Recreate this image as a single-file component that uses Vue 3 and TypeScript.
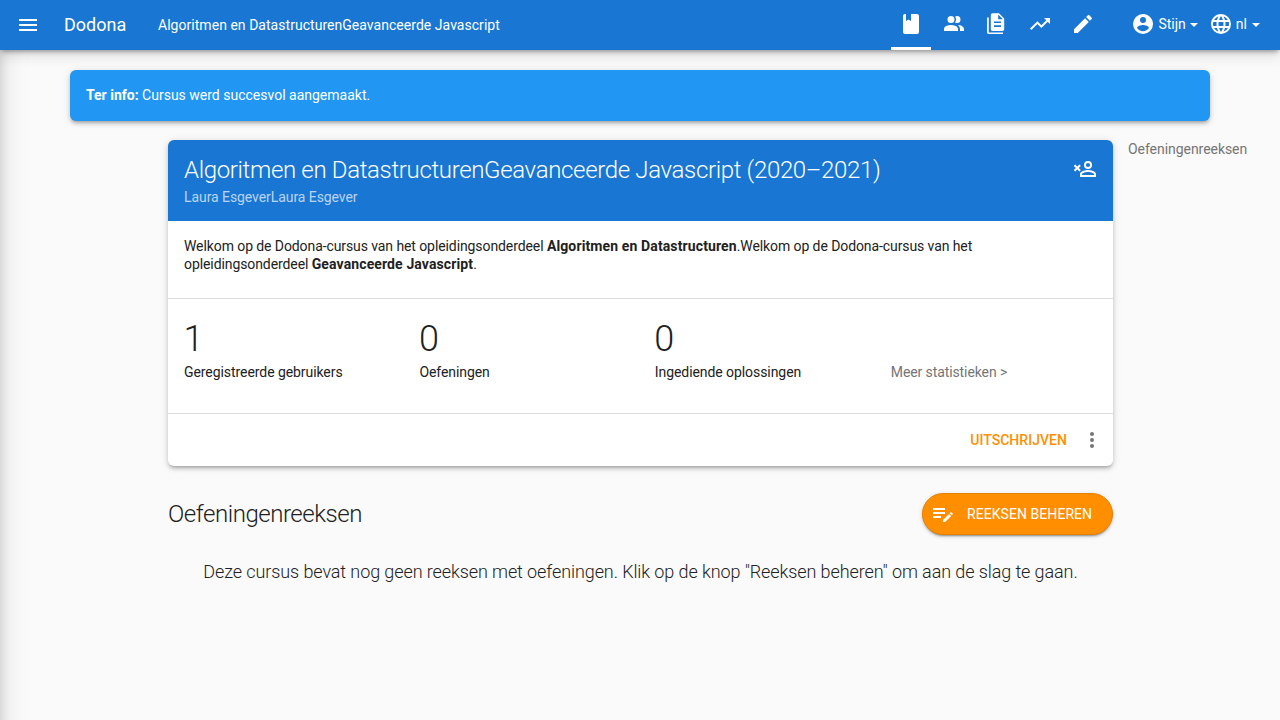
<script setup lang="ts">
interface NavIcon { name: string; path: string; active?: boolean }

const navIcons: NavIcon[] = [
  { name: 'course', active: true, path: 'M18,22A2,2 0 0,0 20,20V4C20,2.89 19.1,2 18,2H12V9L9.5,7.5L7,9V2H6A2,2 0 0,0 4,4V20A2,2 0 0,0 6,22H18Z' },
  { name: 'members', path: 'M16 17V19H2V17S2 13 9 13 16 17 16 17M12.5 7.5A3.5 3.5 0 1 0 9 11A3.5 3.5 0 0 0 12.5 7.5M15.94 13A5.32 5.32 0 0 1 18 17V19H22V17S22 13.37 15.94 13M15 4A3.39 3.39 0 0 0 13.07 4.59A5 5 0 0 1 13.07 10.41A3.39 3.39 0 0 0 15 11A3.5 3.5 0 0 0 15 4Z' },
  { name: 'submissions', path: 'M7.6 1.2H14L19.2 6.4V17.2A1.8 1.8 0 0 1 17.4 19H7.6A1.8 1.8 0 0 1 5.8 17.2V3A1.8 1.8 0 0 1 7.6 1.2M13.2 2.6V7.2H17.8L13.2 2.6M9 9.4V11.1H16V9.4H9M9 13.3V15H16V13.3H9M2 5.5H3.8V20.4H18V22.1H3.8A1.8 1.8 0 0 1 2 20.3V5.5Z' },
  { name: 'statistics', path: 'M16,6L18.29,8.29L13.41,13.17L9.41,9.17L2,16.59L3.41,18L9.41,12L13.41,16L19.71,9.71L22,12V6H16Z' },
  { name: 'edit', path: 'M20.71,7.04C21.1,6.65 21.1,6 20.71,5.63L18.37,3.29C18,2.9 17.35,2.9 16.96,3.29L15.12,5.12L18.87,8.87M3,17.25V21H6.75L17.81,9.93L14.06,6.18L3,17.25Z' },
]

const stats = [
  { value: 1, label: 'Geregistreerde gebruikers' },
  { value: 0, label: 'Oefeningen' },
  { value: 0, label: 'Ingediende oplossingen' },
]
</script>

<template>
  <div class="page">
    <header class="bar">
      <svg class="icon menu" viewBox="0 0 24 24"><path d="M3,6H21V8H3V6M3,11H21V13H3V11M3,16H21V18H3V16Z" /></svg>
      <a class="brand">Dodona</a>
      <a class="crumb">Algoritmen en DatastructurenGeavanceerde Javascript</a>
      <nav class="tabs">
        <a v-for="icon in navIcons" :key="icon.name" class="tab" :class="{ active: icon.active }">
          <svg class="icon" viewBox="0 0 24 24"><path fill-rule="evenodd" :d="icon.path" /></svg>
        </a>
      </nav>
      <a class="drop user">
        <svg class="icon" viewBox="0 0 24 24"><path d="M12,19.2C9.5,19.2 7.29,17.92 6,16C6.03,14 10,12.9 12,12.9C14,12.9 17.97,14 18,16C16.71,17.92 14.5,19.2 12,19.2M12,5A3,3 0 0,1 15,8A3,3 0 0,1 12,11A3,3 0 0,1 9,8A3,3 0 0,1 12,5M12,2A10,10 0 0,0 2,12A10,10 0 0,0 12,22A10,10 0 0,0 22,12C22,6.47 17.5,2 12,2Z" /></svg>
        <span>Stijn</span><i class="caret"></i>
      </a>
      <a class="drop">
        <svg class="icon" viewBox="0 0 24 24"><path d="M16.36,14C16.44,13.34 16.5,12.68 16.5,12C16.5,11.32 16.44,10.66 16.36,10H19.74C19.9,10.64 20,11.31 20,12C20,12.69 19.9,13.36 19.74,14M14.59,19.56C15.19,18.45 15.65,17.25 15.97,16H18.92C17.96,17.65 16.43,18.93 14.59,19.56M14.34,14H9.66C9.56,13.34 9.5,12.68 9.5,12C9.5,11.32 9.56,10.65 9.66,10H14.34C14.43,10.65 14.5,11.32 14.5,12C14.5,12.68 14.43,13.34 14.34,14M12,19.96C11.17,18.76 10.5,17.43 10.09,16H13.91C13.5,17.43 12.83,18.76 12,19.96M8,8H5.08C6.03,6.34 7.57,5.06 9.4,4.44C8.8,5.55 8.35,6.75 8,8M5.08,16H8C8.35,17.25 8.8,18.45 9.4,19.56C7.57,18.93 6.03,17.65 5.08,16M4.26,14C4.1,13.36 4,12.69 4,12C4,11.31 4.1,10.64 4.26,10H7.64C7.56,10.66 7.5,11.32 7.5,12C7.5,12.68 7.56,13.34 7.64,14M12,4.03C12.83,5.23 13.5,6.57 13.91,8H10.09C10.5,6.57 11.17,5.23 12,4.03M18.92,8H15.97C15.65,6.75 15.19,5.55 14.59,4.44C16.43,5.07 17.96,6.34 18.92,8M12,2C6.47,2 2,6.5 2,12A10,10 0 0,0 12,22A10,10 0 0,0 22,12A10,10 0 0,0 12,2Z" /></svg>
        <span>nl</span><i class="caret"></i>
      </a>
    </header>

    <div class="body">
      <div class="alert"><b>Ter info:</b> Cursus werd succesvol aangemaakt.</div>

      <div class="columns">
        <main>
          <section class="card">
            <div class="card-title">
              <div>
                <h1>Algoritmen en DatastructurenGeavanceerde Javascript (2020–2021)</h1>
                <p>Laura EsgeverLaura Esgever</p>
              </div>
              <svg class="icon" viewBox="0 0 24 24"><path fill-rule="evenodd" d="M15 4A4 4 0 1 1 15 12A4 4 0 1 1 15 4M15 5.9A2.1 2.1 0 1 0 15 10.1A2.1 2.1 0 1 0 15 5.9M15 13C17.67 13 23 14.33 23 17V20H7V17C7 14.33 12.33 13 15 13M15 14.9C12 14.9 8.9 16.36 8.9 17V18.1H21.1V17C21.1 16.36 17.97 14.9 15 14.9M4.3 9.59L6.42 7.46L7.84 8.88L5.71 11L7.84 13.12L6.42 14.54L4.3 12.41L2.18 14.54L.76 13.12L2.89 11L.76 8.88L2.18 7.46Z" /></svg>
            </div>
            <div class="intro">
              Welkom op de Dodona-cursus van het opleidingsonderdeel <b>Algoritmen en Datastructuren</b>.Welkom op de Dodona-cursus van het opleidingsonderdeel <b>Geavanceerde Javascript</b>.
            </div>
            <div class="stats">
              <div v-for="stat in stats" :key="stat.label" class="stat">
                <strong>{{ stat.value }}</strong>
                <span>{{ stat.label }}</span>
              </div>
              <a class="more">Meer statistieken &gt;</a>
            </div>
            <div class="actions">
              <a class="leave">Uitschrijven</a>
              <svg class="icon dots" viewBox="0 0 24 24"><path d="M12,16A2,2 0 0,1 14,18A2,2 0 0,1 12,20A2,2 0 0,1 10,18A2,2 0 0,1 12,16M12,10A2,2 0 0,1 14,12A2,2 0 0,1 12,14A2,2 0 0,1 10,12A2,2 0 0,1 12,10M12,4A2,2 0 0,1 14,6A2,2 0 0,1 12,8A2,2 0 0,1 10,6A2,2 0 0,1 12,4Z" /></svg>
            </div>
          </section>

          <div class="series-head">
            <h2>Oefeningenreeksen</h2>
            <button class="manage">
              <svg class="icon" viewBox="0 0 24 24"><path d="M2,6V8H14V6H2M2,10V12H14V10H2M20.04,10.13C19.9,10.13 19.76,10.19 19.65,10.3L18.65,11.3L20.7,13.35L21.7,12.35C21.92,12.14 21.92,11.79 21.7,11.58L20.42,10.3C20.31,10.19 20.18,10.13 20.04,10.13M18.07,11.88L12,17.94V20H14.06L20.12,13.93L18.07,11.88M2,14V16H10V14H2Z" /></svg>
              <span>Reeksen beheren</span>
            </button>
          </div>
          <p class="empty">Deze cursus bevat nog geen reeksen met oefeningen. Klik op de knop "Reeksen beheren" om aan de slag te gaan.</p>
        </main>
        <aside>Oefeningenreeksen</aside>
      </div>
    </div>
    <div class="drawer-shadow"></div>
  </div>
</template>

<style>
body { margin: 0; background: #fafafa; overflow: hidden; }
</style>

<style scoped>
* { box-sizing: border-box; }
.page { position: relative; height: 720px; overflow: hidden; background: #fafafa; color: #212121; font: 14px/18px Roboto, sans-serif; }
.icon { display: block; width: 24px; height: 24px; flex: none; fill: currentColor; }
.bar { position: relative; z-index: 2; display: flex; height: 50px; padding: 0 20px 0 16px; background: #1976d2; color: #fff; box-shadow: 0 5px 5px -3px rgba(0,0,0,.2), 0 8px 10px 1px rgba(0,0,0,.03), 0 3px 14px 2px rgba(0,0,0,.08), 0 2px 4px -1px rgba(0,0,0,.2); }
.menu { margin-top: 13px; }
.brand { margin-left: 24px; width: 94px; font-size: 18px; line-height: 50px; }
.crumb { line-height: 50px; letter-spacing: .035px; }
.tabs { display: flex; gap: 3px; margin-left: auto; margin-right: 28px; }
.tab { width: 40px; height: 50px; padding: 12px 8px 0; }
.tab.active { border-bottom: 3px solid #fff; }
.drop { display: flex; align-items: center; height: 48px; }
.user { margin-right: 11px; }
.drop span { margin-left: 3px; }
.caret { margin: 2px 0 0 5px; border: 4px solid transparent; border-top-color: #fff; border-bottom: 0; }
.user .caret { margin-left: 4px; }
.body { padding: 20px 0 0; }
.alert { width: 1140px; height: 51px; margin: 0 auto 19px; padding: 16px; border-radius: 6px; background: #2196f3; color: #fff; box-shadow: 0 3px 4px 0 rgba(0,0,0,.14), 0 3px 3px -2px rgba(0,0,0,.2), 0 1px 8px 0 rgba(0,0,0,.12); }
.columns { display: flex; padding-left: 168px; gap: 15px; }
main { width: 945px; }
.card { border-radius: 6px; background: #fff; overflow: hidden; box-shadow: 0 3px 4px 0 rgba(0,0,0,.14), 0 3px 3px -2px rgba(0,0,0,.2), 0 1px 8px 0 rgba(0,0,0,.12); }
.card-title { display: flex; justify-content: space-between; height: 81px; padding: 17px 16px 0; background: #1976d2; color: #fff; }
h1, h2 { margin: 0; font-size: 24px; font-weight: 300; line-height: 26px; letter-spacing: -.34px; }
h2 { letter-spacing: -.45px; }
.card-title p { margin: 5px 0 0; color: rgba(255,255,255,.7); letter-spacing: -.07px; }
.intro { height: 77px; padding: 16px; letter-spacing: -.09px; }
.intro b { letter-spacing: .12px; }
.stats { display: grid; grid-template-columns: repeat(2, 235.4px) 236px 1fr; height: 115px; padding: 20px 0 0 16px; border-top: 1px solid #ddd; }
.stat strong { display: block; margin-left: -.5px; font-size: 36px; line-height: 40px; font-weight: 300; }
.stat span { display: block; margin-top: 4px; letter-spacing: -.07px; }
.more { margin-top: 44px; color: #757575; letter-spacing: -.1px; }
.actions { display: flex; align-items: center; justify-content: flex-end; height: 53px; padding-right: 9px; border-top: 1px solid #ddd; }
.leave { margin-right: 13px; color: #ff8f00; font-weight: 500; letter-spacing: .04px; text-transform: uppercase; }
.dots { color: #757575; }
.series-head { display: flex; align-items: center; justify-content: space-between; margin-top: 27px; }
.manage { display: flex; align-items: center; width: 191px; height: 42px; padding: 0 0 0 8px; border: 1px solid #e68100; border-radius: 21px; background: #ff8f00; color: #fff; font: 14px/18px Roboto, sans-serif; letter-spacing: .06px; text-transform: uppercase; box-shadow: 0 2px 2px 0 rgba(0,0,0,.14), 0 3px 1px -2px rgba(0,0,0,.2), 0 1px 5px 0 rgba(0,0,0,.12); }
.manage span { margin-left: 12px; }
.empty { margin: 26px 0 0; text-align: center; font-size: 18px; font-weight: 300; line-height: 22px; letter-spacing: -.095px; white-space: nowrap; }
aside { color: #757575; letter-spacing: -.05px; }
.drawer-shadow { position: absolute; z-index: 1; left: -240px; top: -40px; width: 240px; height: 800px; box-shadow: 0 0 10px 0 rgba(0,0,0,.1), 0 0 24px 0 rgba(0,0,0,.17); }
</style>
